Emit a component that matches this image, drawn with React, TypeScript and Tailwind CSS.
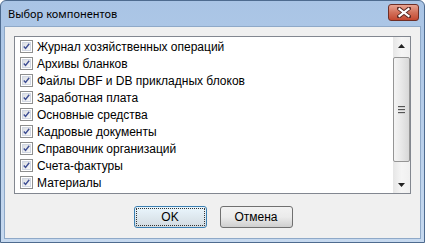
import React from "react";

const items = [
  "Журнал хозяйственных операций",
  "Архивы бланков",
  "Файлы DBF и DB прикладных блоков",
  "Заработная плата",
  "Основные средства",
  "Кадровые документы",
  "Справочник организаций",
  "Счета-фактуры",
  "Материалы",
];

function Check() {
  return (
    <div className="w-[13px] h-[13px] border border-[#8e8f8f] bg-white p-[1px] shrink-0">
      <div className="w-full h-full border border-[#d0d6e2] bg-gradient-to-br from-[#dcdfe3] to-[#f8f8f8] flex items-center justify-center">
        <svg width="9" height="9" viewBox="0 0 9 9" className="block">
          <path d="M1 4.5 L3.3 7 L8 1" fill="none" stroke="#3f4f94" strokeWidth="1.8" />
        </svg>
      </div>
    </div>
  );
}

export default function App() {
  return (
    <div
      className="w-[425px] h-[243px] bg-gradient-to-b from-[#a9c4e5] to-[#c6d9ef] border border-[#4e6b8f] rounded-t-[6px] flex flex-col overflow-hidden"
      style={{ fontFamily: '"Liberation Sans", Arial, sans-serif' }}
    >
      {/* title bar */}
      <div className="h-[25px] shrink-0 flex items-start justify-between">
        <div
          className="pl-[7px] pt-[5px] text-[11px] text-black leading-[15px]"
          style={{ fontFamily: '"Noto Sans", "Open Sans", sans-serif' }}
        >
          Выбор компонентов
        </div>
        <div className="mt-[3px] mr-[5px] w-[31px] h-[17px] rounded-[3px] border border-[#6e2e26] bg-gradient-to-b from-[#e8a493] via-[#d2705a] to-[#c4472f] flex items-center justify-center">
          <svg width="14" height="11" viewBox="0 0 14 11">
            <path d="M2 1.5 L12 9.5 M12 1.5 L2 9.5" stroke="#5b2a24" strokeWidth="4" strokeLinecap="square" />
            <path d="M2.5 2 L11.5 9 M11.5 2 L2.5 9" stroke="#ffffff" strokeWidth="2.2" strokeLinecap="square" />
          </svg>
        </div>
      </div>
      {/* client */}
      <div className="mx-[3px] mb-[3px] flex-1 bg-[#f0f0f0] border border-[#8fa9c8] flex flex-col px-[9px] pt-[9px]">
        <div className="h-[158px] border border-[#828790] bg-white flex">
          <div className="flex-1 flex flex-col pt-[1px] pl-[5px]">
            {items.map((t) => (
              <div key={t} className="h-[17px] flex items-center gap-[4px] text-[12px] text-black leading-none">
                <Check />
                <span>{t}</span>
              </div>
            ))}
          </div>
          {/* scrollbar */}
          <div className="w-[17px] bg-gradient-to-r from-[#e6e6e6] via-[#f5f5f5] to-[#f0f0f0] flex flex-col">
            <div className="h-[17px] flex items-center justify-center">
              <svg width="7" height="4" viewBox="0 0 7 4"><path d="M3.5 0 L7 4 L0 4 Z" fill="#222" /></svg>
            </div>
            <div className="mt-[3px] h-[105px] rounded-[2px] border border-[#959595] bg-gradient-to-r from-[#f4f4f4] via-[#e8e8e8] to-[#d8d8d8] flex flex-col items-center justify-center gap-[1px]">
              <div className="w-[7px] h-[2px] border-b border-[#d0d0d0] bg-[#555]" />
              <div className="w-[7px] h-[2px] border-b border-[#d0d0d0] bg-[#555]" />
              <div className="w-[7px] h-[2px] border-b border-[#d0d0d0] bg-[#555]" />
            </div>
            <div className="flex-1" />
            <div className="h-[17px] flex items-center justify-center">
              <svg width="7" height="4" viewBox="0 0 7 4"><path d="M0 0 L7 0 L3.5 4 Z" fill="#222" /></svg>
            </div>
          </div>
        </div>
        <div className="flex justify-center gap-[13px] mt-[12px] pl-[1px]">
          <div className="w-[73px] h-[22px] rounded-[3px] border border-[#3c7fb1] bg-gradient-to-b from-[#eaf6fd] to-[#d3dbe1] p-[1px]">
            <div className="w-full h-full border border-dotted border-[#333] rounded-[1px] flex items-center justify-center text-[12px] text-black">
              OK
            </div>
          </div>
          <div className="w-[73px] h-[22px] rounded-[3px] border border-[#707070] bg-gradient-to-b from-[#f2f2f2] via-[#ebebeb] to-[#cfcfcf] flex items-center justify-center text-[12px] text-black">
            Отмена
          </div>
        </div>
      </div>
    </div>
  );
}
